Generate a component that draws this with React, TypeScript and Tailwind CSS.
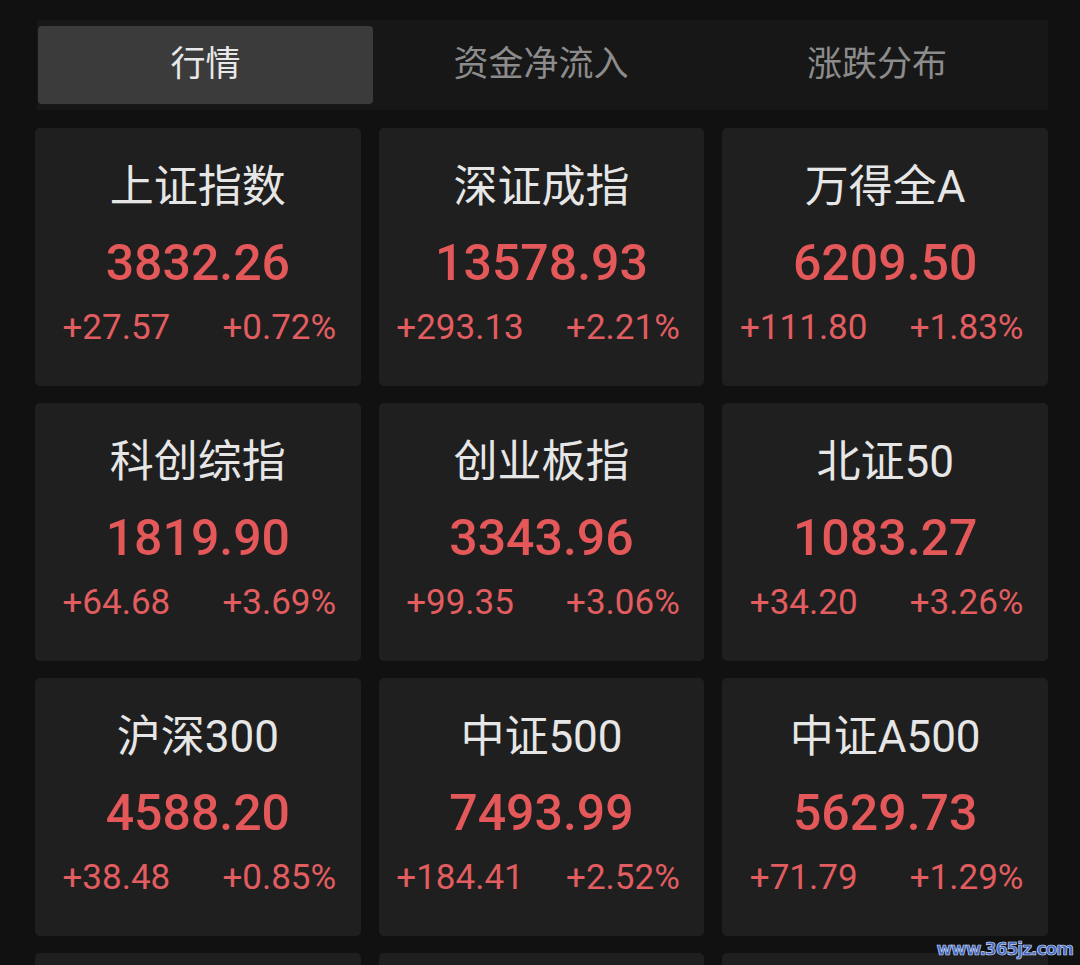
const tabs = ['行情', '资金净流入', '涨跌分布'];

const indices = [
  { name: '上证指数', value: '3832.26', change: '+27.57', pct: '+0.72%' },
  { name: '深证成指', value: '13578.93', change: '+293.13', pct: '+2.21%' },
  { name: '万得全A', value: '6209.50', change: '+111.80', pct: '+1.83%' },
  { name: '科创综指', value: '1819.90', change: '+64.68', pct: '+3.69%' },
  { name: '创业板指', value: '3343.96', change: '+99.35', pct: '+3.06%' },
  { name: '北证50', value: '1083.27', change: '+34.20', pct: '+3.26%' },
  { name: '沪深300', value: '4588.20', change: '+38.48', pct: '+0.85%' },
  { name: '中证500', value: '7493.99', change: '+184.41', pct: '+2.52%' },
  { name: '中证A500', value: '5629.73', change: '+71.79', pct: '+1.29%' },
];

const cjk = "font-['Roboto','Noto_Sans_CJK_SC',sans-serif]";

function IndexCard({ name, value, change, pct }: (typeof indices)[number]) {
  return (
    <div className="h-[258px] rounded-[5px] bg-[#1f1f1f] pt-[37px] flex flex-col items-center">
      <div className="text-[44px] leading-[44px] text-[#e6e6e6]">{name}</div>
      <div className="mt-[29px] text-[50px] leading-[50px] font-medium text-[#e4585a]">{value}</div>
      <div className="mt-[22px] w-full grid grid-cols-2 text-[35px] leading-[35px] text-[#e25d60]">
        <span className="text-center">{change}</span>
        <span className="text-center">{pct}</span>
      </div>
    </div>
  );
}

export default function App() {
  return (
    <div className={`relative h-[965px] overflow-hidden bg-[#111111] ${cjk}`}>
      <div className="pt-[20px] pl-[37px] pr-[32px]">
        <div className="h-[90px] bg-[#171717] pt-[6px] pl-[1px] flex">
          {tabs.map((t, i) => (
            <div
              key={t}
              className={
                i === 0
                  ? 'w-[335px] h-[78px] rounded-[4px] bg-[#3b3b3b] flex items-center justify-center text-[35px] text-[#e8e8e8]'
                  : 'w-[336px] h-[78px] flex items-center justify-center text-[35px] text-[#8c8c8c]'
              }
            >
              {t}
            </div>
          ))}
        </div>
      </div>

      <div className="mt-[18px] pl-[35px] pr-[32px] grid grid-cols-3 gap-x-[18px] gap-y-[17px]">
        {indices.map((it) => (
          <IndexCard key={it.name} {...it} />
        ))}
        <div className="h-[258px] rounded-[5px] bg-[#1f1f1f]" />
        <div className="h-[258px] rounded-[5px] bg-[#1f1f1f]" />
        <div className="h-[258px] rounded-[5px] bg-[#1f1f1f]" />
      </div>

      {/* site stamp in the corner */}
      <div className="absolute right-[7px] bottom-[6px] text-[17px] leading-[20px] font-bold tracking-[-1px] text-[#4369bd] [-webkit-text-stroke:0.7px_#c9d6f5] font-['DejaVu_Sans',sans-serif]">
        www.365jz.com
      </div>
    </div>
  );
}
